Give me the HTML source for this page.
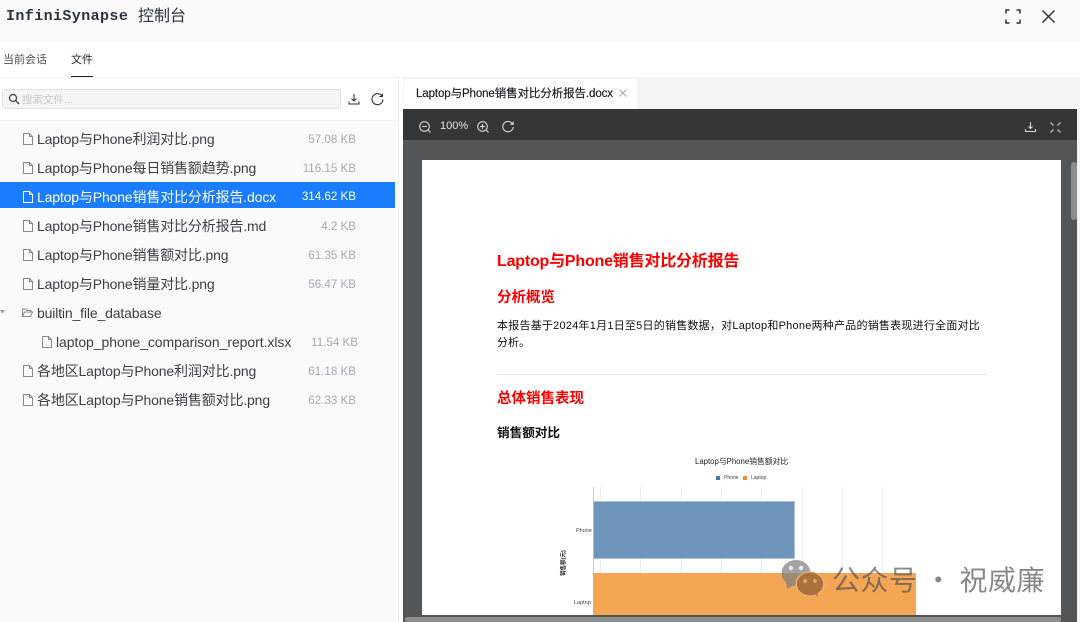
<!DOCTYPE html>
<html><head><meta charset="utf-8"><style>
html,body{margin:0;padding:0;width:1080px;height:622px;overflow:hidden;background:#fff}
body{font-family:"Liberation Sans","Noto Sans CJK SC",sans-serif;position:relative}
.a{position:absolute;white-space:nowrap}
svg{position:absolute;overflow:visible}
.row{position:absolute;left:0;width:395px;height:26px;line-height:26px;font-size:14px;color:#3a3f47}
.row .n{position:absolute;left:37px;top:0;white-space:nowrap;letter-spacing:-.15px}
.row .s{position:absolute;right:39px;top:1px;font-size:11.600px;color:#a3abb8;white-space:nowrap}
.row svg{left:23px;top:7px}
.red{color:#f00;font-weight:bold}
</style></head><body>
<div class="a" style="left:0;top:0;width:1080px;height:42px;background:#fafafa"></div>
<div class="a" style="left:6px;top:6px;font:bold 15px/22px 'Liberation Mono','Noto Sans CJK SC',monospace;letter-spacing:.4px;color:#2b3340">InfiniSynapse</div>
<div class="a" style="left:138px;top:3px;font:400 16px/22px 'Noto Sans CJK SC',sans-serif;color:#2b3340">控制台</div>
<svg style="left:1005px;top:9px" width="16" height="15" fill="none" stroke="#333" stroke-width="1.500"><path d="M1 4.500V1H4.500M11.500 1H15V4.500M15 10.500V14H11.500M4.500 14H1V10.500"/></svg>
<svg style="left:1042px;top:10px" width="13" height="13" fill="none" stroke="#333" stroke-width="1.500"><path d="M.5.5L12.500 12.500M12.500.5L.5 12.500"/></svg>

<div class="a" style="left:3px;top:51px;font-size:11px;line-height:18px;color:#4a4f57">当前会话</div>
<div class="a" style="left:71px;top:51px;font-size:11px;line-height:18px;color:#1f2329">文件</div>
<div class="a" style="left:71px;top:76px;width:22px;height:1.500px;background:#222"></div>
<div class="a" style="left:0;top:77px;width:1080px;height:1px;background:#f3f3f3"></div>

<div class="a" style="left:0;top:78px;width:396px;height:544px;background:#fafafa"></div>
<div class="a" style="left:398px;top:78px;width:1px;height:544px;background:#f0f0f0"></div>
<div class="a" style="left:0;top:78px;width:398px;height:42px;background:#fff"></div>
<div class="a" style="left:0;top:120px;width:398px;height:1px;background:#f3f3f3"></div>
<div class="a" style="left:2px;top:89px;width:337px;height:18px;background:#f5f5f3;border:1px solid #e2e2de;border-radius:3px"></div>
<svg style="left:8px;top:93px" width="12" height="12" fill="none" stroke="#444" stroke-width="1.300"><circle cx="5" cy="5" r="3.500"/><path d="M7.500 7.500L11 11"/></svg>
<div class="a" style="left:22px;top:91px;font-size:10.500px;line-height:18px;color:#c9c9c9">搜索文件...</div>
<svg style="left:348px;top:93px" width="12" height="12" fill="none" stroke="#333" stroke-width="1.100"><path d="M6 1V8M3.500 5.500L6 8L8.500 5.500M1 8.500V11H11V8.500"/></svg>
<svg style="left:371px;top:93px" width="13" height="13" fill="none" stroke="#333" stroke-width="1.100"><path d="M11 3A5.500 5.500 0 1 0 12 6.500M11.500 .5V3.500H8.500"/></svg>

<div class="row" style="top:126px"><svg width="10" height="12" fill="none" stroke="#888"><path d="M.5.5H6.500L9.500 3.500V11.500H.5ZM6.500.5V3.500H9.500"/></svg><span class="n">Laptop与Phone利润对比.png</span><span class="s">57.08 KB</span></div>
<div class="row" style="top:155px"><svg width="10" height="12" fill="none" stroke="#888"><path d="M.5.5H6.500L9.500 3.500V11.500H.5ZM6.500.5V3.500H9.500"/></svg><span class="n">Laptop与Phone每日销售额趋势.png</span><span class="s">116.15 KB</span></div>
<div class="row" style="top:182px;background:#1a7dff;color:#fff;line-height:30px"><svg style="top:9px" width="10" height="12" fill="none" stroke="#fff"><path d="M.5.5H6.500L9.500 3.500V11.500H.5ZM6.500.5V3.500H9.500"/></svg><span class="n">Laptop与Phone销售对比分析报告.docx</span><span class="s" style="color:#fff;top:0">314.62 KB</span></div>
<div class="row" style="top:213px"><svg width="10" height="12" fill="none" stroke="#888"><path d="M.5.5H6.500L9.500 3.500V11.500H.5ZM6.500.5V3.500H9.500"/></svg><span class="n">Laptop与Phone销售对比分析报告.md</span><span class="s">4.2 KB</span></div>
<div class="row" style="top:242px"><svg width="10" height="12" fill="none" stroke="#888"><path d="M.5.5H6.500L9.500 3.500V11.500H.5ZM6.500.5V3.500H9.500"/></svg><span class="n">Laptop与Phone销售额对比.png</span><span class="s">61.35 KB</span></div>
<div class="row" style="top:271px"><svg width="10" height="12" fill="none" stroke="#888"><path d="M.5.5H6.500L9.500 3.500V11.500H.5ZM6.500.5V3.500H9.500"/></svg><span class="n">Laptop与Phone销量对比.png</span><span class="s">56.47 KB</span></div>
<div class="row" style="top:300px"><svg style="left:22px;top:8px" width="11" height="10" fill="none" stroke="#888"><path d="M.5 8.500V1H4L5 2.500H9V4M.5 8.500L2.500 4H10.500L8.500 8.500Z"/></svg><span class="n">builtin_file_database</span></div>
<svg style="left:0;top:310px" width="5" height="4"><path d="M0 0H5L2.500 3.500Z" fill="#999"/></svg>
<div class="row" style="top:329px"><svg style="left:42px" width="10" height="12" fill="none" stroke="#888"><path d="M.5.5H6.500L9.500 3.500V11.500H.5ZM6.500.5V3.500H9.500"/></svg><span class="n" style="left:56px;letter-spacing:-.06px">laptop_phone_comparison_report.xlsx</span><span class="s" style="right:37px">11.54 KB</span></div>
<div class="row" style="top:358px"><svg width="10" height="12" fill="none" stroke="#888"><path d="M.5.5H6.500L9.500 3.500V11.500H.5ZM6.500.5V3.500H9.500"/></svg><span class="n">各地区Laptop与Phone利润对比.png</span><span class="s">61.18 KB</span></div>
<div class="row" style="top:387px"><svg width="10" height="12" fill="none" stroke="#888"><path d="M.5.5H6.500L9.500 3.500V11.500H.5ZM6.500.5V3.500H9.500"/></svg><span class="n">各地区Laptop与Phone销售额对比.png</span><span class="s">62.33 KB</span></div>

<div class="a" style="left:400px;top:78px;width:677px;height:31px;background:#f5f5f5"></div>
<div class="a" style="left:400px;top:78px;width:3px;height:544px;background:#fff"></div>
<div class="a" style="left:404px;top:79px;width:233px;height:30px;background:#fff;border-radius:3px 3px 0 0"></div>
<div class="a" style="left:416px;top:85px;font-size:11.500px;line-height:18px;color:#1d1f24;letter-spacing:-.1px;-webkit-text-stroke:.2px #1d1f24">Laptop与Phone销售对比分析报告.docx</div>
<svg style="left:619px;top:89px" width="8" height="8" fill="none" stroke="#aaa"><path d="M.5.5L7.500 7.500M7.500.5L.5 7.500"/></svg>

<div class="a" style="left:403px;top:109px;width:674px;height:31px;background:#33373a"></div>
<div class="a" style="left:403px;top:140px;width:674px;height:482px;background:#525659"></div>
<div class="a" style="left:1077px;top:78px;width:3px;height:544px;background:#f5f5f5"></div>
<svg style="left:419px;top:121px" width="12" height="12" fill="none" stroke="#d8d8d8" stroke-width="1.100"><circle cx="5.500" cy="5.500" r="4.800"/><path d="M3 5.500H8M9 9L11.500 11.500"/></svg>
<div class="a" style="left:440px;top:118px;font-size:11px;line-height:16px;color:#e4e4e4">100%</div>
<svg style="left:477px;top:121px" width="12" height="12" fill="none" stroke="#d8d8d8" stroke-width="1.100"><circle cx="5.500" cy="5.500" r="4.800"/><path d="M3 5.500H8M5.500 3V8M9 9L11.500 11.500"/></svg>
<svg style="left:502px;top:121px" width="12" height="12" fill="none" stroke="#d8d8d8" stroke-width="1.100"><path d="M10.500 3A5.200 5.200 0 1 0 11.200 6M11.200.5V3.300H8.400"/></svg>
<svg style="left:1025px;top:121px" width="11" height="12" fill="none" stroke="#d8d8d8" stroke-width="1.100"><path d="M5.500 1V7.500M3.500 5.500L5.500 7.500L7.500 5.500M.5 8V10.500H10.500V8"/></svg>
<svg style="left:1050px;top:122px" width="11" height="11" fill="none" stroke="#d8d8d8" stroke-width="1.100"><path d="M.5.5L3.500 3.500M10.500.5L7.500 3.500M.5 10.500L3.500 7.500M10.500 10.500L7.500 7.500"/></svg>
<div class="a" style="left:1071px;top:162px;width:6px;height:58px;background:#8b8d8f;border-radius:3px"></div>
<div class="a" style="left:405px;top:617px;width:656px;height:5px;background:#8b8d8f;border-radius:2px"></div>

<div class="a" style="left:422px;top:160px;width:639px;height:455px;background:#fff;overflow:hidden">
 <div class="a red" style="left:75px;top:91px;font-size:16px;line-height:22px;letter-spacing:-.2px">Laptop与Phone销售对比分析报告</div>
 <div class="a red" style="left:75px;top:128px;font-size:14.500px;line-height:20px">分析概览</div>
 <div class="a" style="left:75px;top:157px;font-size:11px;line-height:18px;color:#111;letter-spacing:.23px">本报告基于2024年1月1日至5日的销售数据，对Laptop和Phone两种产品的销售表现进行全面对比</div>
 <div class="a" style="left:75px;top:174px;font-size:11px;line-height:18px;color:#111">分析。</div>
 <div class="a" style="left:75px;top:214px;width:489px;height:1px;background:#e5e5e5"></div>
 <div class="a red" style="left:75px;top:229px;font-size:14.500px;line-height:20px">总体销售表现</div>
 <div class="a" style="left:75px;top:264px;font-size:12.600px;line-height:18px;font-weight:bold;color:#111">销售额对比</div>
 <div class="a" style="left:273px;top:296px;font-size:7.800px;line-height:12px;color:#222">Laptop与Phone销售额对比</div>
 <div class="a" style="left:294px;top:316px;width:4px;height:4px;background:#4e79a7"></div>
 <div class="a" style="left:302px;top:314px;font-size:5px;line-height:8px;color:#444">Phone</div>
 <div class="a" style="left:321px;top:316px;width:4px;height:4px;background:#f28e2b"></div>
 <div class="a" style="left:329px;top:314px;font-size:5px;line-height:8px;color:#444">Laptop</div>
 <div class="a" style="left:171px;top:327px;width:1px;height:128px;background:#ccc"></div>
 <div class="a" style="left:178px;top:327px;width:1px;height:128px;background:#eee"></div>
 <div class="a" style="left:218px;top:327px;width:1px;height:128px;background:#eee"></div>
 <div class="a" style="left:259px;top:327px;width:1px;height:128px;background:#eee"></div>
 <div class="a" style="left:299px;top:327px;width:1px;height:128px;background:#eee"></div>
 <div class="a" style="left:339px;top:327px;width:1px;height:128px;background:#eee"></div>
 <div class="a" style="left:380px;top:327px;width:1px;height:128px;background:#eee"></div>
 <div class="a" style="left:420px;top:327px;width:1px;height:128px;background:#eee"></div>
 <div class="a" style="left:460px;top:327px;width:1px;height:128px;background:#eee"></div>
 <div class="a" style="left:171px;top:341px;width:202px;height:58px;background:#7095bb;box-sizing:border-box;border:1px solid #a9bfd6"></div>
 <div class="a" style="left:171px;top:413px;width:323px;height:42px;background:#f5a654"></div>
 <div class="a" style="left:154px;top:367px;font-size:5.500px;line-height:8px;color:#444">Phone</div>
 <div class="a" style="left:152px;top:439px;font-size:5.500px;line-height:8px;color:#444">Laptop</div>
 <div class="a" style="left:129px;top:399px;font-size:5.500px;line-height:8px;font-weight:bold;color:#222;transform:rotate(-90deg);transform-origin:center">销售额(元)</div>
</div>

<svg style="left:781px;top:559px" width="43" height="38">
 <ellipse cx="15" cy="14" rx="14.500" ry="13" fill="#7f7f7f" fill-opacity=".72"/>
 <path d="M5 23L6 30L13 26Z" fill="#7f7f7f" fill-opacity=".72"/>
 <circle cx="10" cy="9" r="2.200" fill="#fff" fill-opacity=".8"/><circle cx="20" cy="9" r="2.200" fill="#fff" fill-opacity=".8"/>
 <ellipse cx="29" cy="25" rx="14.500" ry="12.500" fill="#f7b577"/>
 <ellipse cx="29" cy="25" rx="13.200" ry="11.500" fill="#a9713f"/>
 <path d="M33 34L37 38L36 32Z" fill="#a9713f"/>
 <circle cx="24" cy="22" r="1.900" fill="#f5a654"/><circle cx="34" cy="22" r="1.900" fill="#f5a654"/>
</svg>
<div class="a" style="left:832px;top:560px;font-size:28px;line-height:38px;color:rgba(80,80,80,.68);letter-spacing:.5px;font-family:'Noto Sans CJK SC',sans-serif;font-weight:400">公众号 · 祝威廉</div>
</body></html>
